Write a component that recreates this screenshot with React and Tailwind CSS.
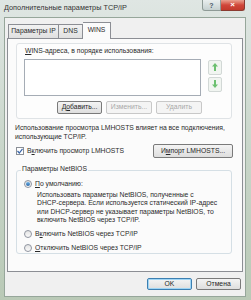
import React from 'react';

const font = { fontFamily: '"Liberation Sans", Arial, sans-serif' };

function Btn({ children, disabled, className = '' }) {
  return (
    <div
      className={`flex items-center justify-center rounded-[2px] border text-[6.8px] leading-none ${
        disabled
          ? 'border-[#c8c8c8] bg-[#f4f4f4] text-[#a8a8a8]'
          : 'border-[#7a7a7a] bg-gradient-to-b from-[#f4f4f4] to-[#dedede] text-[#262626]'
      } ${className}`}
    >
      {children}
    </div>
  );
}

function Radio({ checked }) {
  return (
    <div className="flex h-[8px] w-[8px] shrink-0 items-center justify-center rounded-full border border-[#9095a0] bg-gradient-to-b from-[#e4e4e4] to-[#fafafa]">
      {checked && <div className="h-[4px] w-[4px] rounded-full bg-gradient-to-b from-[#6fb4ea] to-[#2a68a8]" />}
    </div>
  );
}

function ArrowBtn({ up }) {
  return (
    <div className="flex h-[15px] w-[14px] items-center justify-center rounded-[2px] border border-[#d2d8d6] bg-[#f1f5f1]">
      <svg width="8" height="10" viewBox="0 0 8 10">
        {up ? (
          <path d="M4 1 L7 4.5 L5 4.5 L5 9 L3 9 L3 4.5 L1 4.5 Z" fill="#6cc070" />
        ) : (
          <path d="M4 9 L7 5.5 L5 5.5 L5 1 L3 1 L3 5.5 L1 5.5 Z" fill="#6cc070" />
        )}
      </svg>
    </div>
  );
}

export default function App() {
  return (
    <div
      className="flex h-[300px] w-[251px] flex-col overflow-hidden bg-gradient-to-b from-[#dfe6e3] via-[#c9d6ca] to-[#b9c9b6] text-[#2a2a2a]"
      style={font}
    >
      {/* title bar */}
      <div className="flex h-[17px] shrink-0 items-start">
        <div className="pl-[4px] pt-[4px] text-[7.3px] leading-none text-[#333]">
          Дополнительные параметры TCP/IP
        </div>
        <div className="ml-auto mr-[6px] flex">
          <div className="flex h-[11px] w-[19px] items-center justify-center rounded-bl-[3px] border border-t-0 border-[#8e9a96] bg-gradient-to-b from-[#e9eeee] to-[#c5d0d0] text-[7px] font-bold leading-none text-[#4a5a6a]">
            ?
          </div>
          <div className="flex h-[11px] w-[24px] items-center justify-center rounded-br-[3px] border border-l-0 border-t-0 border-[#8a3a30] bg-gradient-to-b from-[#e8a090] via-[#d0463a] to-[#c23a2c] text-[8px] font-bold leading-none text-white">
            ×
          </div>
        </div>
      </div>

      {/* client */}
      <div className="ml-[4px] mr-[5px] flex h-[280px] flex-col border border-[#96a69a] bg-[#f0f0f0] text-[6.8px]">
        {/* tabs */}
        <div className="ml-[3px] mt-[3px] flex h-[17px] items-end">
          <div className="flex h-[14px] w-[51px] items-center justify-center border border-b-0 border-[#8c8e94] bg-gradient-to-b from-[#f2f2f2] to-[#e0e0e0] leading-none">
            Параметры IP
          </div>
          <div className="flex h-[14px] w-[24px] items-center justify-center border border-b-0 border-l-0 border-[#8c8e94] bg-gradient-to-b from-[#f2f2f2] to-[#e0e0e0] leading-none">
            DNS
          </div>
          <div className="relative -mb-px flex h-[17px] w-[28px] items-center justify-center border border-b-0 border-l-0 border-[#8c8e94] bg-[#fbfbfb] pb-[2px] leading-none">
            WINS
          </div>
        </div>

        {/* panel */}
        <div className="ml-[2px] flex h-[234px] w-[236px] flex-col border border-[#8c8e94] bg-[#fbfbfb]">
          {/* WINS address box */}
          <div className="ml-[8px] mt-[4px] flex h-[76px] w-[216px] flex-col rounded-[3px] border border-[#dfe3e6] bg-[#fdfdfd]">
            <div className="ml-[8px] mt-[4px] leading-none">
              <span className="underline">W</span>INS-адреса, в порядке использования:
            </div>
            <div className="ml-[7px] mt-[4px] flex">
              <div className="h-[37px] w-[177px] border border-[#a5acb5] bg-white" />
              <div className="ml-[7px] flex flex-col gap-[2px] pt-[1px]">
                <ArrowBtn up />
                <ArrowBtn />
              </div>
            </div>
            <div className="ml-[40px] mt-[5px] flex gap-[4px]">
              <Btn className="h-[13px] w-[45px]">
                <span>
                  Д<span className="underline">о</span>бавить...
                </span>
              </Btn>
              <Btn disabled className="h-[13px] w-[46px]">
                Изменить...
              </Btn>
              <Btn disabled className="h-[13px] w-[46px]">
                Удалить
              </Btn>
            </div>
          </div>

          <div className="ml-[7px] mt-[5px] leading-[8.5px]">
            Использование просмотра LMHOSTS влияет на все подключения,
            <br />
            использующие TCP/IP.
          </div>

          <div className="ml-[8px] mt-[3px] flex h-[14px] items-center">
            <div className="flex h-[8px] w-[8px] items-center justify-center border border-[#8a8f96] bg-white">
              <svg width="6" height="6" viewBox="0 0 6 6">
                <path d="M0.5 3 L2.3 5 L5.5 0.8" stroke="#3a66a8" strokeWidth="1.2" fill="none" />
              </svg>
            </div>
            <div className="ml-[3px] leading-none">
              В<span className="underline">к</span>лючить просмотр LMHOSTS
            </div>
            <Btn className="ml-auto mr-[9px] h-[14px] w-[80px]">
              <span>
                И<span className="underline">м</span>порт LMHOSTS...
              </span>
            </Btn>
          </div>

          {/* NetBIOS group */}
          <div className="relative ml-[8px] mt-[12px] h-[84px] w-[216px] rounded-[3px] border border-[#d5dfe5]">
            <div className="absolute -top-[5px] left-[4px] bg-[#fbfbfb] px-[1px] leading-none">
              Параметры NetBIOS
            </div>
            <div className="ml-[7px] mt-[9px] flex items-center">
              <Radio checked />
              <div className="ml-[3px] leading-none">
                <span className="underline">П</span>о умолчанию:
              </div>
            </div>
            <div className="ml-[20px] mt-[3px] leading-[8.3px]">
              Использовать параметры NetBIOS, полученные с
              <br />
              DHCP-сервера. Если используется статический IP-адрес
              <br />
              или DHCP-сервер не указывает параметры NetBIOS, то
              <br />
              включить NetBIOS через TCP/IP.
            </div>
            <div className="ml-[7px] mt-[6px] flex items-center">
              <Radio />
              <div className="ml-[3px] leading-none">
                В<span className="underline">к</span>лючить NetBIOS через TCP/IP
              </div>
            </div>
            <div className="ml-[7px] mt-[6px] flex items-center">
              <Radio />
              <div className="ml-[3px] leading-none">
                <span className="underline">О</span>тключить NetBIOS через TCP/IP
              </div>
            </div>
          </div>
        </div>

        {/* bottom buttons */}
        <div className="mr-[4px] mt-[6px] flex justify-end gap-[4px]">
          <Btn className="h-[12px] w-[45px] !border-[#3c7fb1] shadow-[inset_0_0_0_1px_#9fd5f5]">OK</Btn>
          <Btn className="h-[12px] w-[45px]">Отмена</Btn>
        </div>
      </div>
    </div>
  );
}
